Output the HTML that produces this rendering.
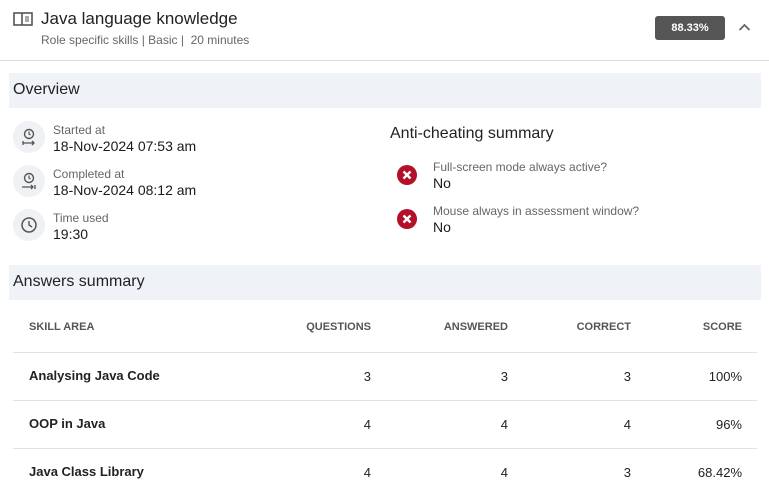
<!DOCTYPE html>
<html><head><meta charset="utf-8"><style>
*{margin:0;padding:0;box-sizing:border-box}
body{width:769px;height:500px;overflow:hidden;background:#fff;font-family:"Liberation Sans",Arial,sans-serif;color:#212121;position:relative}
.a{position:absolute}
.bar{position:absolute;left:9px;width:752px;height:35px;background:#eff2f6;font-size:16px;padding:8px 0 0 4px;color:#222}
.ic{position:absolute;left:13px;width:32px;height:32px;border-radius:50%;background:#eff1f5}
.lbl{font-size:12px;color:#666}
.val{font-size:14px;color:#1a1a1a;margin-top:1px}
.x{position:absolute;left:397px;width:20px;height:20px;border-radius:50%;background:#b3102a}
.h{font-size:11px;font-weight:bold;color:#555;top:321px}
.line{position:absolute;left:13px;width:744px;height:1px;background:#e3e3e3}
.r{font-size:13px;color:#222}
</style></head><body>
<svg class="a" style="left:13px;top:12px" width="20" height="14" viewBox="0 0 20 14"><rect x="1" y="1" width="18" height="12" fill="none" stroke="#555" stroke-width="1.6"/><line x1="9" y1="1" x2="9" y2="13" stroke="#555" stroke-width="1.6"/><line x1="12" y1="5" x2="16" y2="5" stroke="#555"/><line x1="12" y1="7" x2="16" y2="7" stroke="#555"/><line x1="12" y1="9" x2="16" y2="9" stroke="#555"/></svg>
<div class="a" style="left:41px;top:9px;font-size:17px;color:#222">Java language knowledge</div>
<div class="a" style="left:41px;top:33px;font-size:12px;color:#666">Role specific skills | Basic | &nbsp;20 minutes</div>
<div class="a" style="left:655px;top:16px;width:70px;height:24px;background:#555;border-radius:3px;color:#fff;font-size:11px;font-weight:bold;text-align:center;line-height:24px">88.33%</div>
<svg class="a" style="left:738px;top:23px" width="13" height="9" viewBox="0 0 13 9"><path d="M1.5 7 L6.5 2 L11.5 7" fill="none" stroke="#666" stroke-width="1.8"/></svg>
<div class="a" style="left:0;top:60px;width:769px;height:1px;background:#ddd"></div>
<div class="bar" style="top:73px">Overview</div>

<div class="ic" style="top:121px"></div>
<svg class="a" style="left:21px;top:127px" width="16" height="20" viewBox="0 0 16 20"><circle cx="8" cy="7" r="4.5" fill="none" stroke="#555" stroke-width="1.4"/><path d="M8 4.5V7L9.5 8" fill="none" stroke="#555" stroke-width="1.2"/><path d="M2 14v4M2 16h11M11 14l2 2-2 2" fill="none" stroke="#555" stroke-width="1.3"/></svg>
<div class="a" style="left:53px;top:123px"><div class="lbl">Started at</div><div class="val">18-Nov-2024 07:53 am</div></div>
<div class="ic" style="top:165px"></div>
<svg class="a" style="left:21px;top:171px" width="16" height="20" viewBox="0 0 16 20"><circle cx="8" cy="7" r="4.5" fill="none" stroke="#555" stroke-width="1.4"/><path d="M8 4.5V7L9.5 8" fill="none" stroke="#555" stroke-width="1.2"/><path d="M1 16h11M10 14l2 2-2 2M14 14v4" fill="none" stroke="#555" stroke-width="1.3"/></svg>
<div class="a" style="left:53px;top:167px"><div class="lbl">Completed at</div><div class="val">18-Nov-2024 08:12 am</div></div>
<div class="ic" style="top:209px"></div>
<svg class="a" style="left:20px;top:216px" width="18" height="18" viewBox="0 0 18 18"><circle cx="9" cy="9" r="7" fill="none" stroke="#555" stroke-width="1.5"/><path d="M9 5V9L12 11" fill="none" stroke="#555" stroke-width="1.4"/></svg>
<div class="a" style="left:53px;top:211px"><div class="lbl">Time used</div><div class="val">19:30</div></div>

<div class="a" style="left:390px;top:125px;font-size:16px;color:#222">Anti-cheating summary</div>
<div class="x" style="top:165px"></div>
<svg class="a" style="left:397px;top:165px" width="20" height="20"><path d="M6.5 6.5L13.5 13.5M13.5 6.5L6.5 13.5" stroke="#fff" stroke-width="2.4"/></svg>
<div class="a" style="left:433px;top:160px"><div class="lbl">Full-screen mode always active?</div><div class="val">No</div></div>
<div class="x" style="top:209px"></div>
<svg class="a" style="left:397px;top:209px" width="20" height="20"><path d="M6.5 6.5L13.5 13.5M13.5 6.5L6.5 13.5" stroke="#fff" stroke-width="2.4"/></svg>
<div class="a" style="left:433px;top:204px"><div class="lbl">Mouse always in assessment window?</div><div class="val">No</div></div>

<div class="bar" style="top:265px">Answers summary</div>
<div class="a h" style="left:29px">SKILL AREA</div>
<div class="a h" style="right:398px">QUESTIONS</div>
<div class="a h" style="right:261px">ANSWERED</div>
<div class="a h" style="right:138px">CORRECT</div>
<div class="a h" style="right:27px">SCORE</div>
<div class="line" style="top:352px"></div>
<div class="line" style="top:400px"></div>
<div class="line" style="top:448px"></div>

<div class="a r" style="left:29px;top:368px;font-weight:bold">Analysing Java Code</div>
<div class="a r" style="right:398px;top:369px">3</div><div class="a r" style="right:261px;top:369px">3</div><div class="a r" style="right:138px;top:369px">3</div><div class="a r" style="right:27px;top:369px">100%</div>
<div class="a r" style="left:29px;top:416px;font-weight:bold">OOP in Java</div>
<div class="a r" style="right:398px;top:417px">4</div><div class="a r" style="right:261px;top:417px">4</div><div class="a r" style="right:138px;top:417px">4</div><div class="a r" style="right:27px;top:417px">96%</div>
<div class="a r" style="left:29px;top:464px;font-weight:bold">Java Class Library</div>
<div class="a r" style="right:398px;top:465px">4</div><div class="a r" style="right:261px;top:465px">4</div><div class="a r" style="right:138px;top:465px">3</div><div class="a r" style="right:27px;top:465px">68.42%</div>
</body></html>
